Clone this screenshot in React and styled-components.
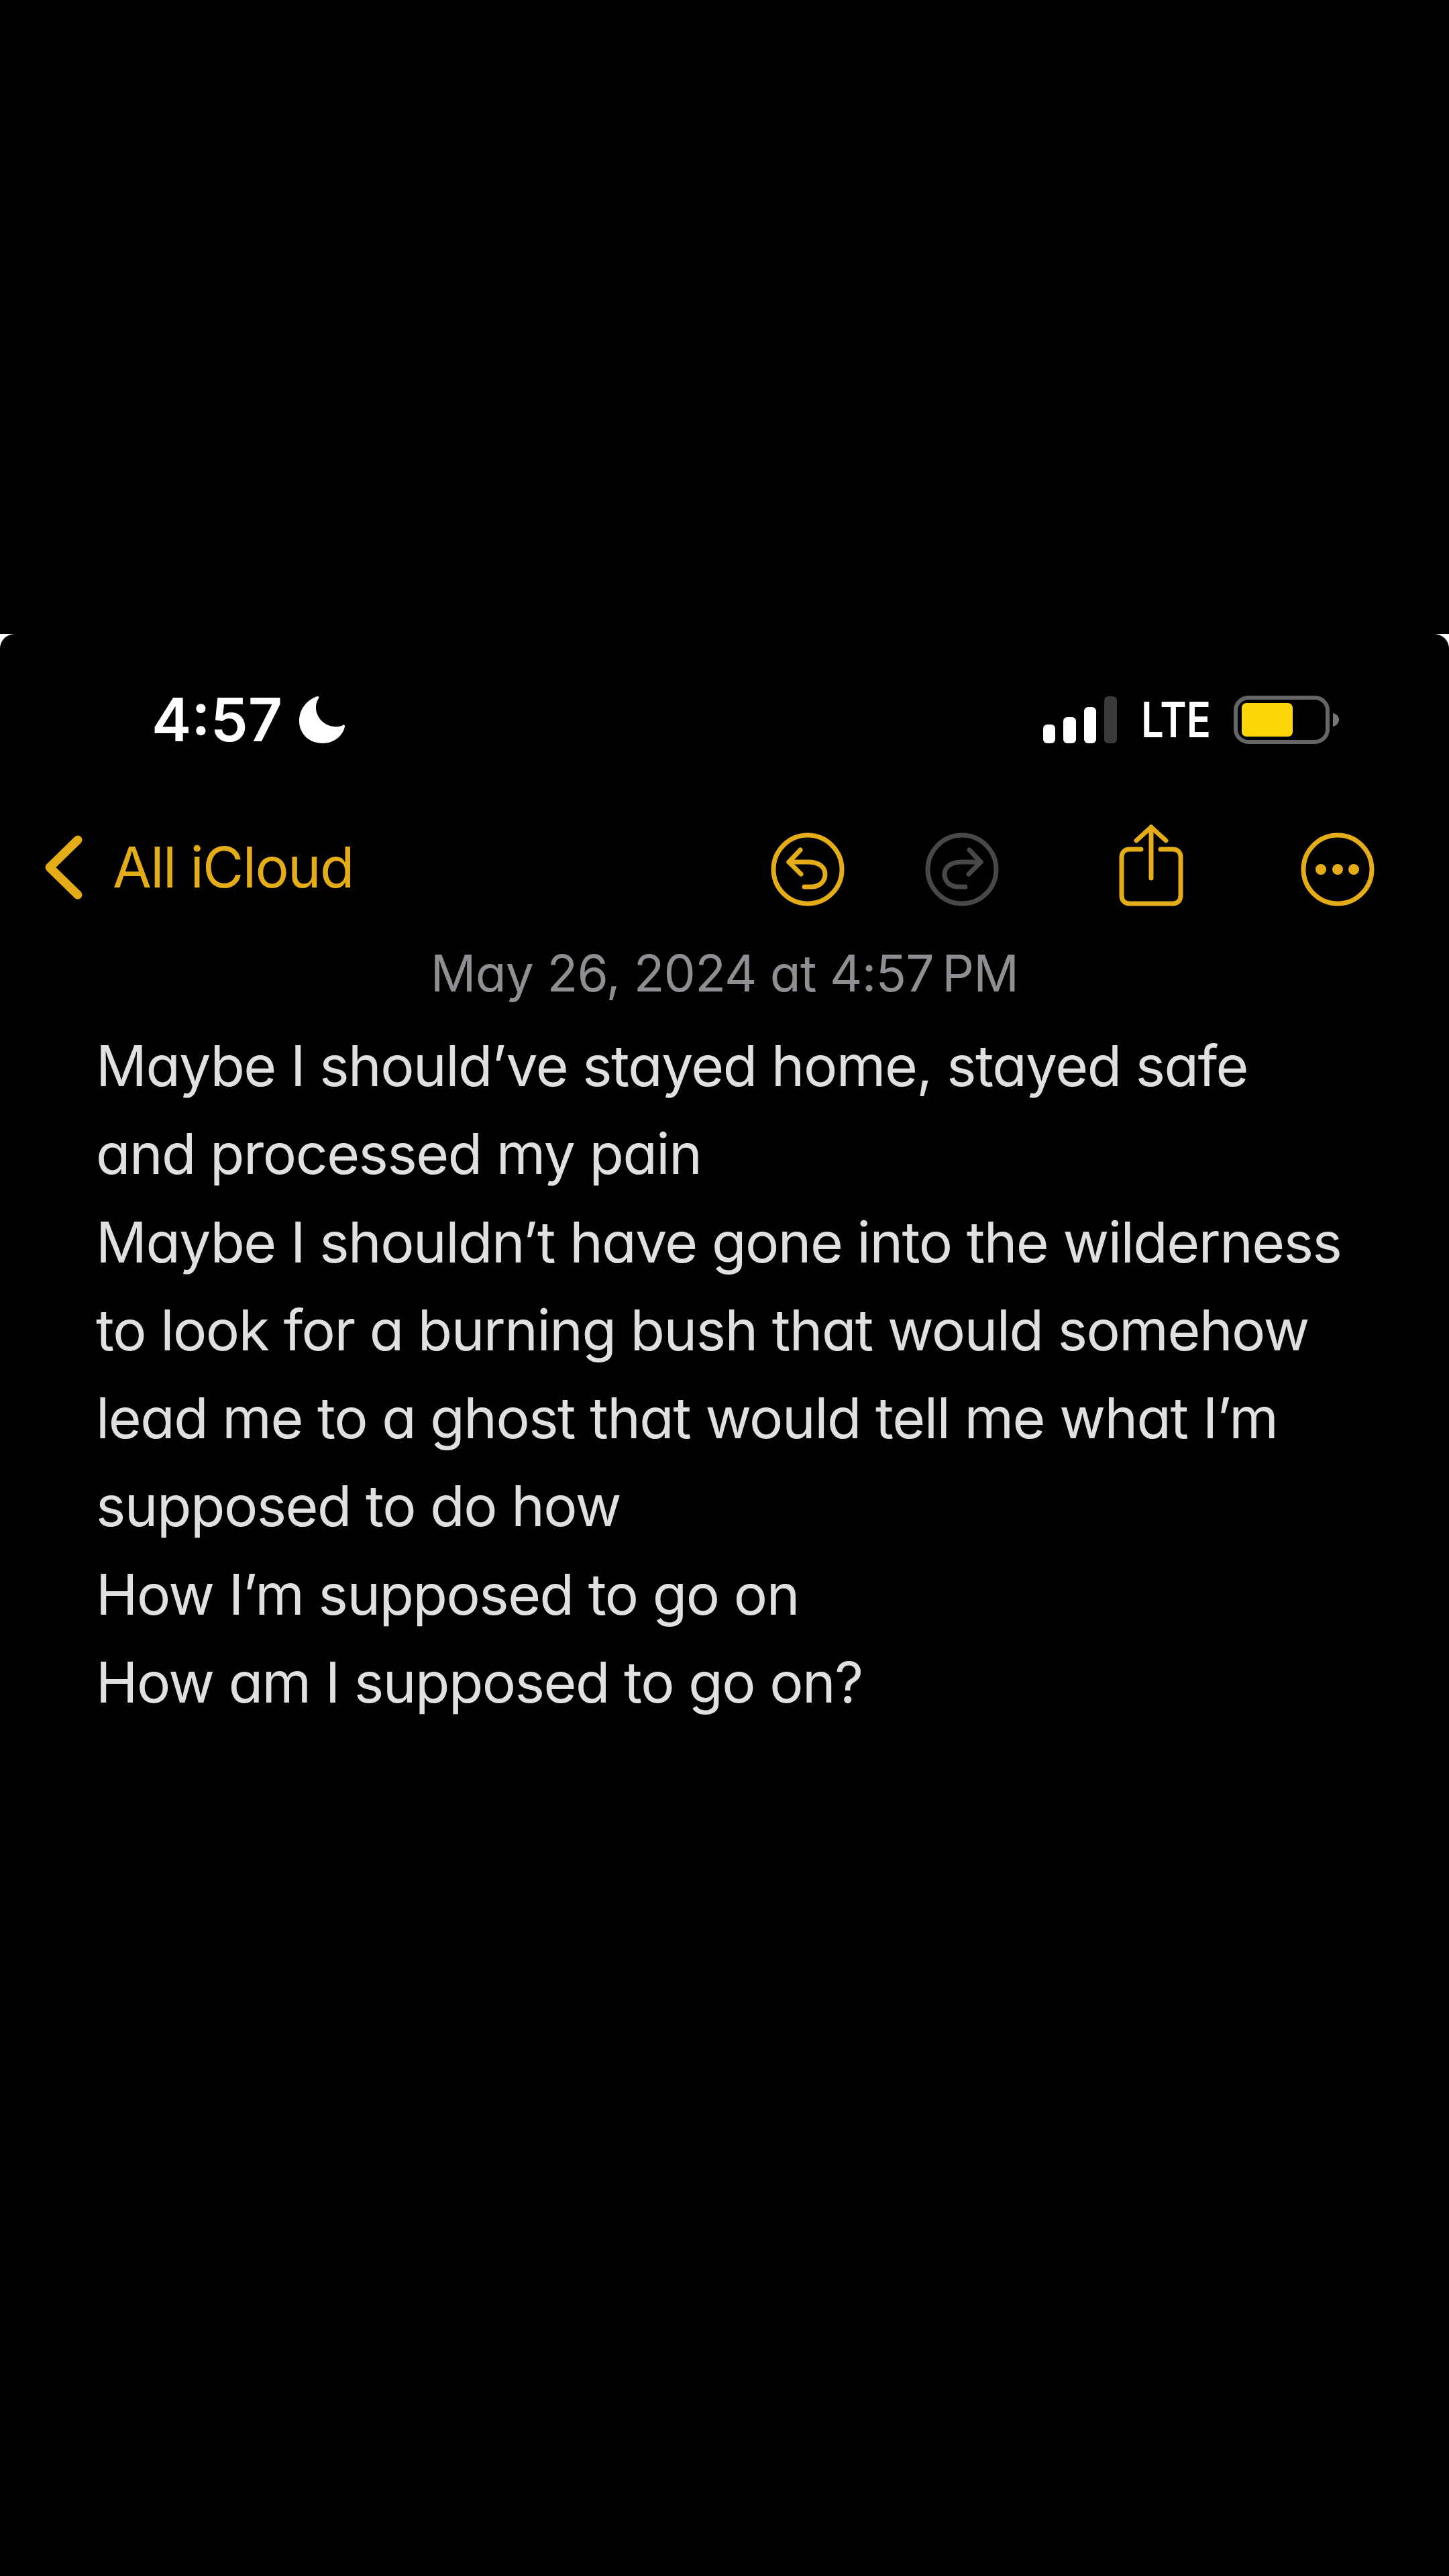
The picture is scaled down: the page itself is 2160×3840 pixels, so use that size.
import React from "react";
import styled, { createGlobalStyle } from "styled-components";

const accent = "#e4ad17";

const Global = createGlobalStyle`
  html, body {
    margin: 0;
    padding: 0;
    background: #000;
  }
  body {
    font-family: Inter, "Liberation Sans", sans-serif;
    font-feature-settings: "cv11";
  }
`;

const Page = styled.div`
  width: 2160px;
  height: 3840px;
  padding-top: 945px;
  box-sizing: border-box;
  background: #000;
  overflow: hidden;
`;

// white shows only through the two rounded top corners
const Backing = styled.div`
  height: 2895px;
  background: #fff;
`;

const Screen = styled.div`
  height: 100%;
  background: #000;
  border-radius: 22px 22px 0 0;
`;

const StatusBar = styled.div`
  display: flex;
  align-items: flex-start;
  justify-content: space-between;
  height: 290px;
  box-sizing: border-box;
  padding: 91px 164px 0 226px;
`;

const StatusGroup = styled.div`
  display: flex;
  align-items: center;
  gap: ${(p) => p.$gap}px;
  height: 74px;
`;

const Clock = styled.span`
  font-size: 89px;
  font-weight: 600;
  line-height: 74px;
  color: #fff;
`;

const Network = styled.span`
  display: inline-block;
  width: 102px;
  font-size: 73px;
  font-weight: 600;
  line-height: 74px;
  color: #fff;
  transform: scaleX(0.82);
  transform-origin: left center;
  white-space: nowrap;
`;

const Icon = styled.svg`
  display: block;
  flex: none;
`;

const Toolbar = styled.div`
  display: flex;
  align-items: center;
  height: 122px;
  padding-left: 67px;
`;

const BackLink = styled.div`
  display: flex;
  align-items: center;
  gap: 45px;
  width: 1082px;
  padding-bottom: 7px;
  color: ${accent};
  font-size: 84px;
  line-height: 115px;
  letter-spacing: -1.7px;
`;

const ToolGroup = styled.div`
  display: flex;
  align-items: center;
`;

const ToolSlot = styled.div`
  margin-left: ${(p) => p.$gap}px;
  margin-bottom: ${(p) => p.$lift || 0}px;
`;

const DateLine = styled.div`
  margin-top: 44px;
  text-align: center;
  font-size: 75px;
  line-height: 100px;
  letter-spacing: -0.8px;
  color: #8e8e93;
`;

const Tight = styled.span`
  margin-left: -8px;
`;

const Note = styled.div`
  margin-top: 22px;
  padding-left: 143px;
  font-size: 84px;
  font-weight: 380;
  line-height: 131.3px;
  letter-spacing: -1.5px;
  color: #e0e0e0;
`;

const NoteLine = styled.div`
  white-space: nowrap;
`;

const lines = [
  "Maybe I should’ve stayed home, stayed safe",
  "and processed my pain",
  "Maybe I shouldn’t have gone into the wilderness",
  "to look for a burning bush that would somehow",
  "lead me to a ghost that would tell me what I’m",
  "supposed to do how",
  "How I’m supposed to go on",
  "How am I supposed to go on?",
];

const Moon = () => (
  <Icon width="70" height="72" viewBox="0 0 70 72">
    <path
      fill="#fff"
      d="M28 1C15 5 1 18 1 38c0 19 15 33 35 33 17 0 30-11 33-25 .3-2-1-3-3-2-4 2-9 3-14 2C36 44 25 30 26 16c.2-5 2-9 4-12 1-2 0-3.5-2-3z"
    />
  </Icon>
);

const Signal = () => (
  <Icon width="110" height="70" viewBox="0 0 110 70">
    <rect x="0" y="42" width="18" height="28" rx="6" fill="#fff" />
    <rect x="30" y="31" width="19" height="39" rx="6" fill="#fff" />
    <rect x="61" y="16" width="18" height="54" rx="6" fill="#fff" />
    <rect x="91" y="0" width="19" height="70" rx="6" fill="#3a3a3a" />
  </Icon>
);

const Battery = () => (
  <Icon width="157" height="72" viewBox="0 0 157 72">
    <rect x="3" y="3" width="137" height="66" rx="19" fill="none" stroke="#666" strokeWidth="6" />
    <rect x="12" y="11" width="76" height="50" rx="7" fill="#ffd60a" />
    <path d="M148 26c5 1 9 5 9 10s-4 9-9 10z" fill="#777" />
  </Icon>
);

const Chevron = () => (
  <Icon width="56" height="96" viewBox="0 0 56 96">
    <path d="M49 7 7 48l42 41" fill="none" stroke={accent} strokeWidth="13" strokeLinecap="round" strokeLinejoin="round" />
  </Icon>
);

const Undo = ({ color, flip }) => (
  <Icon width="110" height="110" viewBox="0 0 110 110" style={flip ? { transform: "scaleX(-1)" } : undefined}>
    <g fill="none" stroke={color} strokeWidth="7" strokeLinecap="round" strokeLinejoin="round">
      <circle cx="55" cy="55" r="51" />
      <path d="M44 26 27 44l18 18" />
      <path d="M27 44h29c15 0 25 7 25 18 0 12-9 19-21 19H50" />
    </g>
  </Icon>
);

const Share = () => (
  <Icon width="96" height="122" viewBox="0 0 96 122">
    <g fill="none" stroke={accent} strokeWidth="7" strokeLinecap="round" strokeLinejoin="round">
      <path d="M33 37H16C8 37 4 42 4 49v57c0 7 4 12 12 12h64c8 0 12-5 12-12V49c0-7-4-12-12-12H62" />
      <path d="M48 4v76" />
      <path d="M26 24 48 4l22 20" />
    </g>
  </Icon>
);

const More = () => (
  <Icon width="110" height="110" viewBox="0 0 110 110">
    <circle cx="55" cy="55" r="51" fill="none" stroke={accent} strokeWidth="7" />
    <circle cx="30" cy="55" r="8" fill={accent} />
    <circle cx="55" cy="55" r="8" fill={accent} />
    <circle cx="79" cy="55" r="8" fill={accent} />
  </Icon>
);

export default function App() {
  return (
    <Page>
      <Global />
      <Backing>
        <Screen>
          <StatusBar>
            <StatusGroup $gap={24}>
              <Clock>4:57</Clock>
              <Moon />
            </StatusGroup>
            <StatusGroup $gap={36}>
              <Signal />
              <Network>LTE</Network>
              <Battery />
            </StatusGroup>
          </StatusBar>
          <Toolbar>
            <BackLink>
              <Chevron />
              All iCloud
            </BackLink>
            <ToolGroup>
              <ToolSlot $gap={0}>
                <Undo color={accent} />
              </ToolSlot>
              <ToolSlot $gap={120}>
                <Undo color="#48484a" flip />
              </ToolSlot>
              <ToolSlot $gap={179} $lift={12}>
                <Share />
              </ToolSlot>
              <ToolSlot $gap={175}>
                <More />
              </ToolSlot>
            </ToolGroup>
          </Toolbar>
          <DateLine>
            May 26, 2024 at 4:57 <Tight>PM</Tight>
          </DateLine>
          <Note>
            {lines.map((line) => (
              <NoteLine key={line}>{line}</NoteLine>
            ))}
          </Note>
        </Screen>
      </Backing>
    </Page>
  );
}
